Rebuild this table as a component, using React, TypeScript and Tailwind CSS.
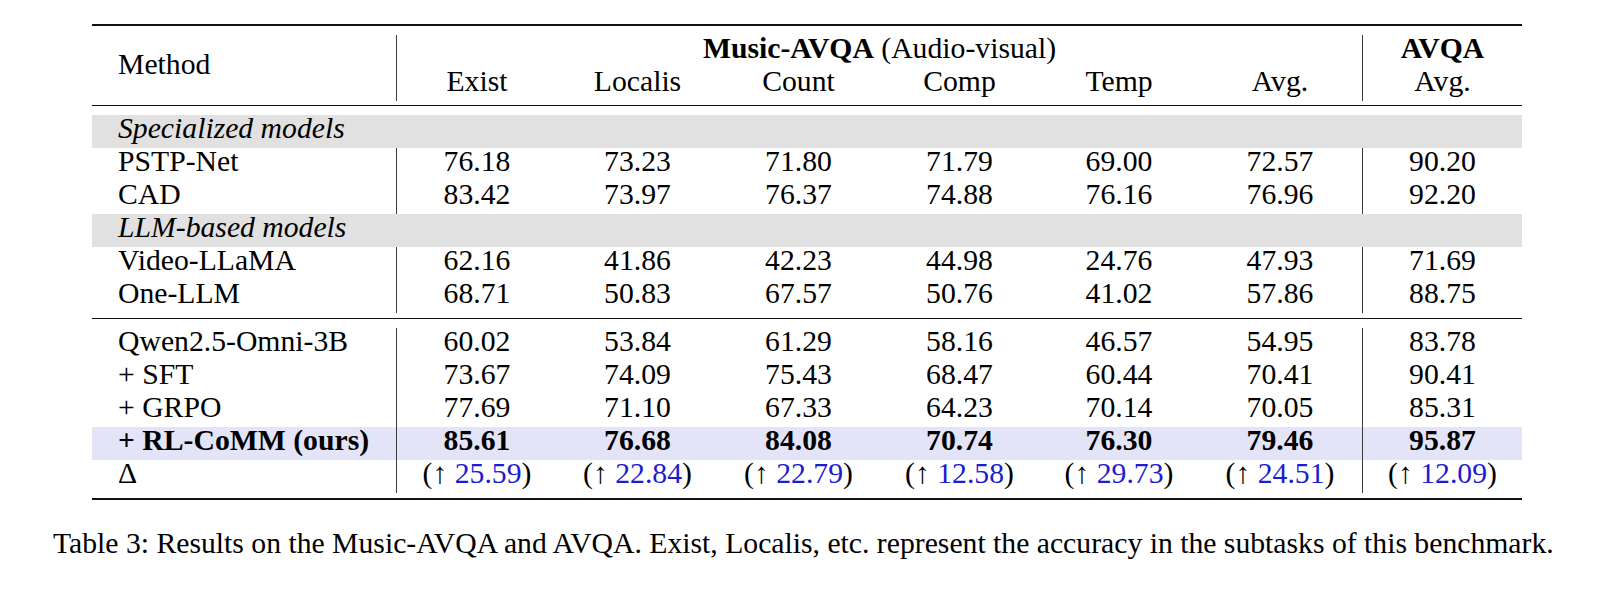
import React from "react";

type Row = { name: string; vals: string[]; bold?: boolean };

const cols = "grid grid-cols-[304px_161px_161px_161px_161px_158px_164px_160px]";

const specialized: Row[] = [
  { name: "PSTP-Net", vals: ["76.18", "73.23", "71.80", "71.79", "69.00", "72.57", "90.20"] },
  { name: "CAD", vals: ["83.42", "73.97", "76.37", "74.88", "76.16", "76.96", "92.20"] },
];

const llmBased: Row[] = [
  { name: "Video-LLaMA", vals: ["62.16", "41.86", "42.23", "44.98", "24.76", "47.93", "71.69"] },
  { name: "One-LLM", vals: ["68.71", "50.83", "67.57", "50.76", "41.02", "57.86", "88.75"] },
];

const ours: Row[] = [
  { name: "Qwen2.5-Omni-3B", vals: ["60.02", "53.84", "61.29", "58.16", "46.57", "54.95", "83.78"] },
  { name: "+ SFT", vals: ["73.67", "74.09", "75.43", "68.47", "60.44", "70.41", "90.41"] },
  { name: "+ GRPO", vals: ["77.69", "71.10", "67.33", "64.23", "70.14", "70.05", "85.31"] },
  { name: "+ RL-CoMM (ours)", vals: ["85.61", "76.68", "84.08", "70.74", "76.30", "79.46", "95.87"], bold: true },
];

const deltas = ["25.59", "22.84", "22.79", "12.58", "29.73", "24.51", "12.09"];

// cell with a vertical rule on its left (after Method and before AVQA)
const cellClass = (i: number) =>
  i === 0 || i === 6
    ? "h-[33px] text-center border-l border-[#3a3a3a]"
    : "h-[33px] text-center";

const DataRow = ({ row }: { row: Row }) => (
  <div className={`${cols} ${row.bold ? "bg-[#e4e4f9] font-bold" : ""}`}>
    <div className="h-[33px] pl-[26px] whitespace-nowrap">{row.name}</div>
    {row.vals.map((v, i) => (
      <div key={i} className={cellClass(i)}>
        {v}
      </div>
    ))}
  </div>
);

const Band = ({ label }: { label: string }) => (
  <div className="h-[33px] bg-[#e1e1e1] pl-[26px] italic">{label}</div>
);

export default function App() {
  return (
    <div className="bg-white w-[1618px] h-[591px] text-black font-['Liberation_Serif',serif] text-[29.7px] leading-[27px] pt-[24px]">
      <div className="ml-[92px] w-[1430px]">
        <div className="h-[2px] bg-[#111]" />

        {/* header */}
        <div className={`${cols} mt-[9px]`}>
          <div className="row-span-2 pl-[26px] pt-[16px]">Method</div>
          <div className="col-span-6 h-[33px] text-center border-l border-[#3a3a3a]">
            <span className="font-bold">Music-AVQA</span> (Audio-visual)
          </div>
          <div className="h-[33px] text-center border-l border-[#3a3a3a] font-bold">AVQA</div>
          {["Exist", "Localis", "Count", "Comp", "Temp", "Avg.", "Avg."].map((h, i) => (
            <div key={i} className={cellClass(i)}>
              {h}
            </div>
          ))}
        </div>

        <div className="mt-[4px] h-px bg-[#111]" />

        <div className="mt-[9px]">
          <Band label="Specialized models" />
          {specialized.map((r) => (
            <DataRow key={r.name} row={r} />
          ))}
          <Band label="LLM-based models" />
          {llmBased.map((r) => (
            <DataRow key={r.name} row={r} />
          ))}
        </div>

        <div className="mt-[5px] h-px bg-[#111]" />

        <div className="mt-[9px]">
          {ours.map((r) => (
            <DataRow key={r.name} row={r} />
          ))}
          <div className={cols}>
            <div className="h-[33px] pl-[26px]">Δ</div>
            {deltas.map((d, i) => (
              <div key={i} className={cellClass(i)}>
                (↑ <span className="text-[#1c1cd0]">{d}</span>)
              </div>
            ))}
          </div>
        </div>

        <div className="mt-[5px] h-[2px] bg-[#111]" />
      </div>

      <p className="ml-[53px] mt-[30px] whitespace-nowrap">
        Table 3: Results on the Music-AVQA and AVQA. Exist, Localis, etc. represent the accuracy in the subtasks of this benchmark.
      </p>
    </div>
  );
}
